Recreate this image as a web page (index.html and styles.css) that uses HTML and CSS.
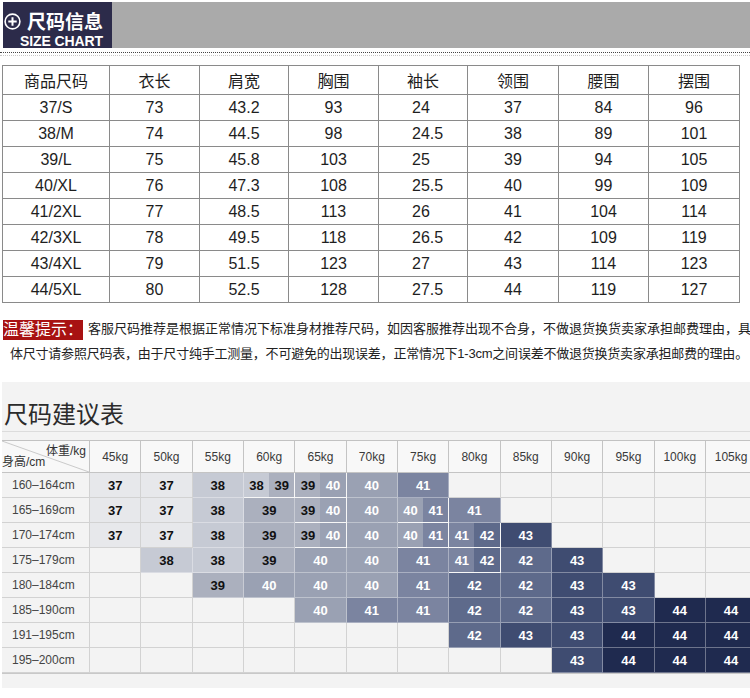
FILE: index.html
```html
<!DOCTYPE html>
<html lang="zh">
<head>
<meta charset="utf-8">
<title>尺码信息</title>
<link rel="stylesheet" href="styles.css">
</head>
<body>
<header class="head">
  <div class="logo">
    <div class="logo-top">
      <svg class="plus" viewBox="0 0 17 17"><circle cx="8.5" cy="8.5" r="7.4" fill="none" stroke="#fff" stroke-width="1.6"/><path d="M8.5 4.3v8.4M4.3 8.5h8.4" stroke="#fff" stroke-width="2"/></svg>
      <span class="logo-title">尺码信息</span>
    </div>
    <div class="logo-sub">SIZE CHART</div>
  </div>
  <div class="bar"></div>
</header>
<div class="dots"></div>

<table class="sizes">
  <colgroup><col class="w1"><col class="w2"><col class="w3"><col class="w2"><col class="w3"><col class="w4"><col class="w2"><col class="w4"></colgroup>
  <thead>
    <tr><th>商品尺码</th><th>衣长</th><th>肩宽</th><th>胸围</th><th>袖长</th><th>领围</th><th>腰围</th><th>摆围</th></tr>
  </thead>
  <tbody>
    <tr><td>37/S</td><td>73</td><td>43.2</td><td>93</td><td class="lt">24</td><td>37</td><td>84</td><td>96</td></tr>
    <tr><td>38/M</td><td>74</td><td>44.5</td><td>98</td><td class="lt">24.5</td><td>38</td><td>89</td><td>101</td></tr>
    <tr><td>39/L</td><td>75</td><td>45.8</td><td>103</td><td class="lt">25</td><td>39</td><td>94</td><td>105</td></tr>
    <tr><td>40/XL</td><td>76</td><td>47.3</td><td>108</td><td class="lt">25.5</td><td>40</td><td>99</td><td>109</td></tr>
    <tr><td>41/2XL</td><td>77</td><td>48.5</td><td>113</td><td class="lt">26</td><td>41</td><td>104</td><td>114</td></tr>
    <tr><td>42/3XL</td><td>78</td><td>49.5</td><td>118</td><td class="lt">26.5</td><td>42</td><td>109</td><td>119</td></tr>
    <tr><td>43/4XL</td><td>79</td><td>51.5</td><td>123</td><td class="lt">27</td><td>43</td><td>114</td><td>123</td></tr>
    <tr><td>44/5XL</td><td>80</td><td>52.5</td><td>128</td><td class="lt">27.5</td><td>44</td><td>119</td><td>127</td></tr>
  </tbody>
</table>

<div class="notice">
  <div class="line1"><span class="tag">温馨提示：</span>客服尺码推荐是根据正常情况下标准身材推荐尺码，如因客服推荐出现不合身，不做退货换货卖家承担邮费理由，具</div>
  <div class="line2">体尺寸请参照尺码表，由于尺寸纯手工测量，不可避免的出现误差，正常情况下1-3cm之间误差不做退货换货卖家承担邮费的理由。</div>
</div>

<section class="advice">
  <h2 class="title">尺码建议表</h2>
  <div class="grid">
    <div class="c corner">
      <svg class="diag" viewBox="0 0 88 32" preserveAspectRatio="none"><line x1="0" y1="0" x2="88" y2="32" stroke="#c9c9c9" stroke-width="1"/></svg>
      <span class="cw">体重/kg</span><span class="ch">身高/cm</span>
    </div>
    <div class="c k">45kg</div><div class="c k">50kg</div><div class="c k">55kg</div><div class="c k">60kg</div><div class="c k">65kg</div><div class="c k">70kg</div><div class="c k">75kg</div><div class="c k">80kg</div><div class="c k">85kg</div><div class="c k">90kg</div><div class="c k">95kg</div><div class="c k">100kg</div><div class="c k">105kg</div>

    <div class="c r">160–164cm</div>
    <div class="c v37">37</div><div class="c v37">37</div><div class="c v38">38</div>
    <div class="c s"><span class="v38">38</span><span class="v39">39</span></div>
    <div class="c s"><span class="v39">39</span><span class="v40">40</span></div>
    <div class="c v40">40</div><div class="c v41">41</div>
    <div class="c"></div><div class="c"></div><div class="c"></div><div class="c"></div><div class="c"></div><div class="c"></div>

    <div class="c r">165–169cm</div>
    <div class="c v37">37</div><div class="c v37">37</div><div class="c v38">38</div><div class="c v39">39</div>
    <div class="c s"><span class="v39">39</span><span class="v40">40</span></div>
    <div class="c v40">40</div>
    <div class="c s"><span class="v40">40</span><span class="v41">41</span></div>
    <div class="c v41">41</div>
    <div class="c"></div><div class="c"></div><div class="c"></div><div class="c"></div><div class="c"></div>

    <div class="c r">170–174cm</div>
    <div class="c v37">37</div><div class="c v37">37</div><div class="c v38">38</div><div class="c v39">39</div>
    <div class="c s"><span class="v39">39</span><span class="v40">40</span></div>
    <div class="c v40">40</div>
    <div class="c s"><span class="v40">40</span><span class="v41">41</span></div>
    <div class="c s"><span class="v41">41</span><span class="v42">42</span></div>
    <div class="c v43">43</div>
    <div class="c"></div><div class="c"></div><div class="c"></div><div class="c"></div>

    <div class="c r">175–179cm</div>
    <div class="c"></div><div class="c v38">38</div><div class="c v38">38</div><div class="c v39">39</div><div class="c v40">40</div><div class="c v40">40</div><div class="c v41">41</div>
    <div class="c s"><span class="v41">41</span><span class="v42">42</span></div>
    <div class="c v42">42</div><div class="c v43">43</div>
    <div class="c"></div><div class="c"></div><div class="c"></div>

    <div class="c r">180–184cm</div>
    <div class="c"></div><div class="c"></div><div class="c v39">39</div><div class="c v40">40</div><div class="c v40">40</div><div class="c v40">40</div><div class="c v41">41</div><div class="c v42">42</div><div class="c v42">42</div><div class="c v43">43</div><div class="c v43">43</div>
    <div class="c"></div><div class="c"></div>

    <div class="c r">185–190cm</div>
    <div class="c"></div><div class="c"></div><div class="c"></div><div class="c"></div>
    <div class="c v40">40</div><div class="c v41">41</div><div class="c v41">41</div><div class="c v42">42</div><div class="c v42">42</div><div class="c v43">43</div><div class="c v43">43</div><div class="c v44">44</div><div class="c v44">44</div>

    <div class="c r">191–195cm</div>
    <div class="c"></div><div class="c"></div><div class="c"></div><div class="c"></div><div class="c"></div><div class="c"></div><div class="c"></div>
    <div class="c v42">42</div><div class="c v43">43</div><div class="c v43">43</div><div class="c v44">44</div><div class="c v44">44</div><div class="c v44">44</div>

    <div class="c r">195–200cm</div>
    <div class="c"></div><div class="c"></div><div class="c"></div><div class="c"></div><div class="c"></div><div class="c"></div><div class="c"></div><div class="c"></div><div class="c"></div>
    <div class="c v43">43</div><div class="c v44">44</div><div class="c v44">44</div><div class="c v44">44</div>
  </div>
</section>
</body>
</html>
```

FILE: styles.css
```css
* { box-sizing: border-box; }

body {
  margin: 0;
  width: 750px;
  overflow: hidden;
  background: #fff;
  color: #1e1e1e;
  font-family: "Liberation Sans", "Noto Sans CJK SC", sans-serif;
}

/* header */
.head {
  display: flex;
  height: 46px;
  margin-top: 2px;
}
.logo {
  width: 109px;
  margin-left: 3px;
  background: #2c2b4a;
  color: #fff;
  padding: 8px 0 0 1px;
}
.logo-top {
  display: flex;
  align-items: center;
  gap: 6px;
  height: 22px;
}
.plus { width: 17px; height: 17px; flex: none; }
.logo-title {
  font-family: "Noto Sans CJK SC", sans-serif;
  font-size: 19px;
  font-weight: bold;
  line-height: 22px;
}
.logo-sub {
  font-size: 14px;
  font-weight: bold;
  line-height: 14px;
  margin-top: 2px;
  padding-left: 16px;
  letter-spacing: -0.1px;
}
.bar { flex: 1; background: #aaaaaa; }

.dots {
  margin-top: 4px;
  height: 4px;
  border-top: 1px dotted #444;
  border-bottom: 1px dotted #c8c8c8;
}

/* size table */
.sizes {
  margin: 9px 0 0 2px;
  width: 737px;
  border-collapse: collapse;
  table-layout: fixed;
}
.w1 { width: 107px; }
.w2 { width: 90px; }
.w3 { width: 89px; }
.w4 { width: 91px; }
.sizes th, .sizes td {
  border: 1px solid #8a8a8a;
  text-align: center;
  font-size: 16px;
  font-weight: normal;
  padding: 0;
  color: #1e1e1e;
}
.sizes thead tr { height: 29px; }
.sizes tbody tr { height: 26px; }
.sizes td.lt { text-align: left; padding-left: 33px; }

/* notice */
.notice {
  margin-top: 13px;
  font-size: 13px;
  line-height: 25px;
  white-space: nowrap;
  color: #222;
}
.tag {
  display: inline-block;
  height: 20px;
  line-height: 20px;
  margin: 0 5px 0 3px;
  background: #a81212;
  color: #fff;
  font-size: 16px;
  vertical-align: middle;
}
.line1 { height: 25px; }
.line2 { padding-left: 10px; letter-spacing: -0.22px; }

/* advice chart */
.advice {
  margin: 16px 0 0 2px;
  background: #f3f3f3;
  padding-bottom: 14px;
  overflow: hidden;
}
.title {
  margin: 0;
  padding: 16px 0 3px 2px;
  font-family: "Noto Sans CJK SC", sans-serif;
  font-size: 24px;
  font-weight: normal;
  line-height: 30px;
  color: #2b2b2b;
  border-bottom: 1px solid #dcdcdc;
}
.grid {
  margin-top: 8px;
  display: grid;
  grid-template-columns: 88px repeat(13, 51.33px);
  grid-template-rows: 32px repeat(8, 25px);
  border-top: 1px solid #c2c2c2;
  border-bottom: 1px solid #c8c8c8;
}
.c {
  display: flex;
  align-items: center;
  justify-content: center;
  border-right: 1px solid #d2d2d2;
  border-bottom: 1px solid #d2d2d2;
  font-size: 13px;
  font-weight: bold;
  color: #111;
}
.k {
  background: #f8f8f8;
  font-size: 12px;
  font-weight: normal;
  color: #3a3a3a;
  border-color: #c4c4c4;
}
.r {
  justify-content: flex-start;
  padding-left: 10px;
  font-size: 12px;
  font-weight: normal;
  color: #444;
}
.corner {
  position: relative;
  flex-direction: column;
  align-items: stretch;
  justify-content: flex-start;
  padding: 5px 3px 0 0;
  background: #f8f8f8;
  border-color: #c4c4c4;
  font-family: "Liberation Sans", "Noto Sans CJK SC", sans-serif;
  font-size: 12px;
  font-weight: normal;
  color: #333;
  line-height: 11px;
}
.diag { position: absolute; left: 0; top: 0; width: 100%; height: 100%; }
.cw { text-align: right; position: relative; }
.ch { text-align: left; position: relative; }

.s { padding: 0; align-items: stretch; }
.s span {
  flex: 1;
  display: flex;
  align-items: center;
  justify-content: center;
}

.v37 { background: #e7e8eb; color: #111; }
.v38 { background: #c6cad4; color: #111; }
.v39 { background: #abb0be; color: #111; }
.v40 { background: #9aa1b3; color: #fff; }
.v41 { background: #7b84a0; color: #fff; }
.v42 { background: #5e6a8b; color: #fff; }
.v43 { background: #3f4c71; color: #fff; }
.v44 { background: #1f2a4f; color: #fff; }
.c.v38, .c.v39, .c.v40, .c.v41, .c.v42, .c.v43, .c.v44, .c.s {
  border-color: rgba(255, 255, 255, 0.35);
}
```
